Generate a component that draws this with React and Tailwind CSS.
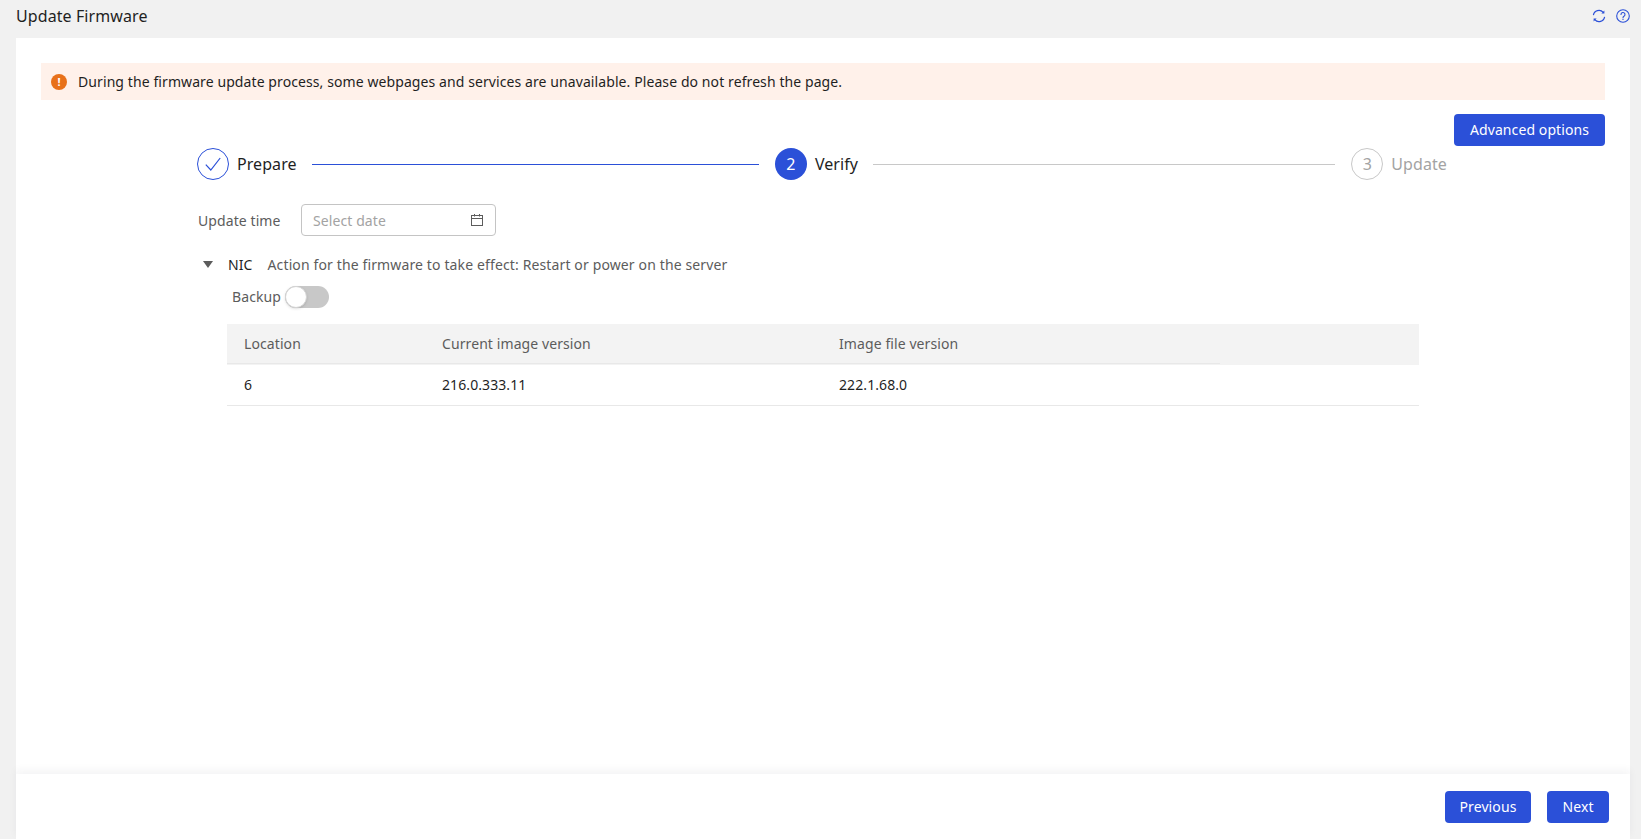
const BLUE = 'bg-[#2b50d8]'

function Button({ className, children }) {
  return (
    <button className={`h-8 rounded-sm ${BLUE} pb-px text-[14px] text-white ${className}`}>{children}</button>
  )
}

function RefreshIcon() {
  return (
    <svg width="14" height="14" viewBox="0 0 14 14" fill="none" stroke="#2b50d8" strokeWidth="1.2">
      <path d="M1.4 6.2A5.6 5.6 0 0 1 11.2 3.4" />
      <path d="M12.6 7.8A5.6 5.6 0 0 1 2.8 10.6" />
      <path d="M12.4 1.6v3h-3z" fill="#2b50d8" stroke="none" />
      <path d="M1.6 12.4v-3h3z" fill="#2b50d8" stroke="none" />
    </svg>
  )
}

function HelpIcon() {
  return (
    <svg width="14" height="14" viewBox="0 0 14 14" fill="none" stroke="#2b50d8" strokeWidth="1.1">
      <circle cx="7" cy="7" r="6.3" />
      <path d="M5 5.5a2 2 0 1 1 3 1.7c-.7.4-1 .8-1 1.5" strokeLinecap="round" />
      <circle cx="7" cy="10.4" r=".6" fill="#2b50d8" stroke="none" />
    </svg>
  )
}

function CalendarIcon() {
  return (
    <svg width="14" height="14" viewBox="0 0 14 14" fill="none" stroke="#5c5c5c" strokeWidth="1">
      <rect x="1.5" y="2.5" width="11" height="10" />
      <path d="M1.5 5.5h11M4.5 1v2.5M9.5 1v2.5" />
    </svg>
  )
}

export default function App() {
  return (
    <div className="flex h-[839px] flex-col overflow-hidden bg-[#f1f1f1] font-['Noto_Sans',sans-serif] text-[14px] tracking-[0.09px] text-[#1f1f1f]">
      {/* header */}
      <header className="flex h-[38px] shrink-0 items-center justify-between pb-[6px] pl-4 pr-[11px]">
        <h1 className="text-[16px]">Update Firmware</h1>
        <div className="flex items-center gap-[10px]">
          <RefreshIcon />
          <HelpIcon />
        </div>
      </header>

      <div className="ml-4 mr-[11px] flex min-h-0 flex-1 flex-col bg-white">
        <main className="min-h-0 flex-1 px-[25px] pt-[25px]">
          {/* alert */}
          <div className="flex h-[37px] items-center gap-[11px] bg-[#fff1ea] pl-[10px]">
            <span className="grid h-4 w-4 place-items-center rounded-full bg-[#e8711a] text-[11px] font-bold leading-none text-white">!</span>
            <span>During the firmware update process, some webpages and services are unavailable. Please do not refresh the page.</span>
          </div>

          <div className="mt-[14px] flex justify-end">
            <Button className="w-[151px]">Advanced options</Button>
          </div>

          {/* steps */}
          <div className="mt-[2px] ml-[156px] flex h-8 w-[1250px] items-center">
            <span className="grid h-8 w-8 place-items-center rounded-full border border-[#2b50d8] text-[#2b50d8]">
              <svg width="18" height="18" viewBox="0 0 18 18" fill="none" stroke="currentColor" strokeWidth="1.2">
                <path d="M1.8 9.6l5 5.4L16.2 3" />
              </svg>
            </span>
            <span className="ml-2 text-[16px]">Prepare</span>
            <span className="ml-[15px] h-px w-[449px] bg-[#2b50d8]" />
            <span className={`ml-4 grid h-8 w-8 place-items-center rounded-full ${BLUE} text-[16px] text-white`}>2</span>
            <span className="ml-2 text-[16px]">Verify</span>
            <span className="ml-[15px] h-px w-[464px] bg-[#c8c8c8]" />
            <span className="ml-4 grid h-8 w-8 place-items-center rounded-full border border-[#c8c8c8] text-[16px] text-[#a3a3a3]">3</span>
            <span className="ml-2 text-[16px] text-[#a3a3a3]">Update</span>
          </div>

          {/* update time */}
          <div className="ml-[157px] mt-6 flex items-center">
            <span className="w-[103px] text-[#5c5c5c]">Update time</span>
            <div className="flex h-8 w-[195px] items-center justify-between rounded-sm border border-[#c4c4c4] pl-[11px] pr-[11px] text-[#a3a3a3]">
              <span>Select date</span>
              <CalendarIcon />
            </div>
          </div>

          {/* NIC */}
          <div className="ml-[162px] mt-4 flex h-6 items-center">
            <span className="h-0 w-0 border-x-[5px] border-t-[7px] border-x-transparent border-t-[#5c5c5c]" />
            <span className="ml-[15px]">NIC</span>
            <span className="ml-[15px] tracking-[0.13px] text-[#5c5c5c]">Action for the firmware to take effect: Restart or power on the server</span>
          </div>

          <div className="ml-[191px] mt-[10px] flex h-[22px] items-center">
            <span className="pb-[2px] text-[#5c5c5c]">Backup</span>
            <span className="relative ml-[4px] h-[22px] w-[44px] rounded-full bg-[#c8c8c8]">
              <span className="absolute left-0 top-0 h-[22px] w-[22px] rounded-full border border-[#d4d4d4] bg-white shadow-sm" />
            </span>
          </div>

          {/* table */}
          <div className="ml-[186px] mt-4 w-[1192px]">
            <div className="relative flex h-[41px] items-center bg-[#f3f3f3] pb-[2px] text-[#5c5c5c]">
              <span className="w-[215px] pl-[17px]">Location</span>
              <span className="w-[397px]">Current image version</span>
              <span>Image file version</span>
              <span className="absolute bottom-px left-0 h-px w-[993px] bg-[#e8e8e8]" />
            </div>
            <div className="flex h-[41px] items-center border-b border-[#e8e8e8] pb-[2px]">
              <span className="w-[215px] pl-[17px]">6</span>
              <span className="w-[397px]">216.0.333.11</span>
              <span>222.1.68.0</span>
            </div>
          </div>
        </main>

        {/* footer */}
        <footer className="flex h-[65px] shrink-0 items-start justify-end gap-4 pr-[21px] pt-[17px] shadow-[0_-4px_8px_rgba(37,43,58,0.05)]">
          <Button className="w-[86px]">Previous</Button>
          <Button className="w-[62px]">Next</Button>
        </footer>
      </div>
    </div>
  )
}
